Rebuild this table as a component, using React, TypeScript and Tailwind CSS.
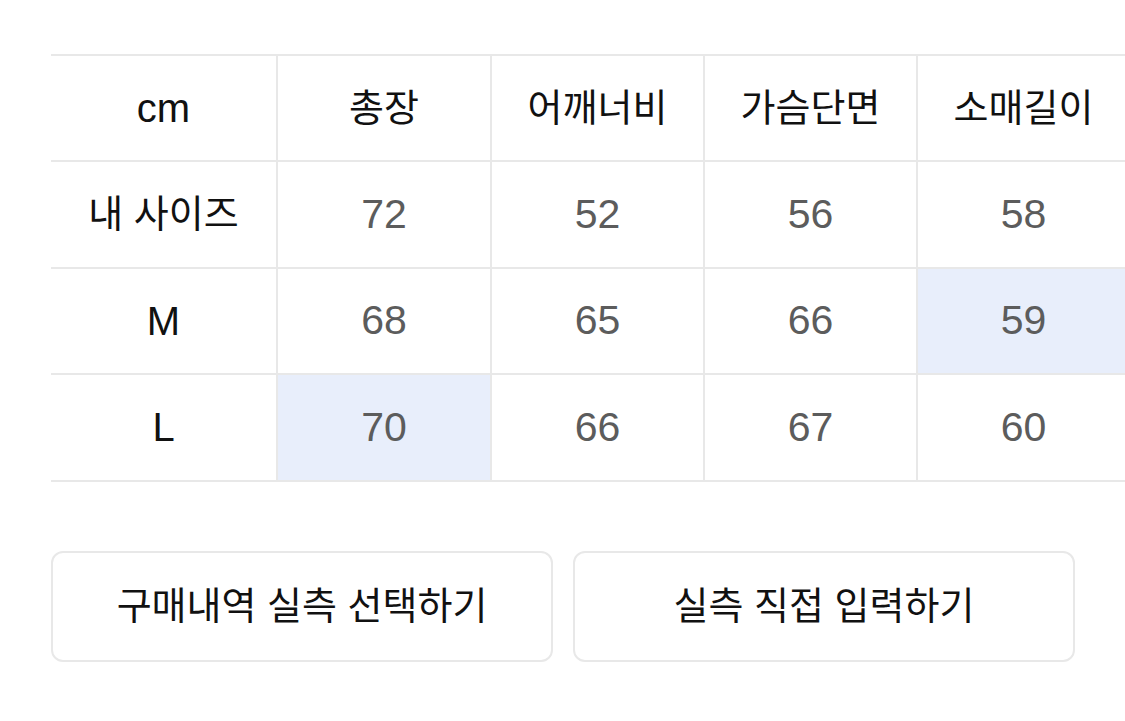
import React from "react";

const headers = ["cm", "총장", "어깨너비", "가슴단면", "소매길이"];
const rows: { label: string; values: string[]; hl?: number }[] = [
  { label: "내 사이즈", values: ["72", "52", "56", "58"] },
  { label: "M", values: ["68", "65", "66", "59"], hl: 3 },
  { label: "L", values: ["70", "66", "67", "60"], hl: 0 },
];

const isLatin = (s: string) => /^[A-Za-z]+$/.test(s);

export default function App() {
  return (
    <div
      className="w-[1125px] h-[721px] bg-white overflow-hidden pt-[54px] pl-[51px]"
      style={{ fontFamily: '"Liberation Sans", "Noto Sans CJK KR", sans-serif' }}
    >
      <div className="w-[1100px] border-t-2 border-[#e8e8e8]">
        <div className="grid grid-cols-[225px_214px_213px_213px_213px] h-[106px] border-b-2 border-[#e8e8e8]">
          {headers.map((h, i) => (
            <div
              key={h}
              className={`flex items-center justify-center ${isLatin(h) ? "text-[40px]" : "text-[38px]"} text-[#111] ${i > 0 ? "border-l-2 border-[#e8e8e8]" : ""}`}
            >
              {h}
            </div>
          ))}
        </div>
        {rows.map((r) => (
          <div
            key={r.label}
            className="grid grid-cols-[225px_214px_213px_213px_213px] h-[106.5px] border-b-2 border-[#e8e8e8]"
          >
            <div
              className={`flex items-center justify-center ${isLatin(r.label) ? "text-[40px]" : "text-[38px]"} text-[#111]`}
            >
              {r.label}
            </div>
            {r.values.map((v, j) => (
              <div
                key={j}
                className={`flex items-center justify-center text-[41px] text-[#5c5c5c] border-l-2 border-[#e8e8e8] ${r.hl === j ? "bg-[#e8eefb]" : ""}`}
              >
                {v}
              </div>
            ))}
          </div>
        ))}
      </div>
      <div className="flex gap-[20px] mt-[69px]">
        <button className="w-[502px] h-[111px] border-2 border-[#e8e8e8] rounded-[12px] bg-white text-[38px] text-[#111] flex items-center justify-center">
          구매내역 실측 선택하기
        </button>
        <button className="w-[502px] h-[111px] border-2 border-[#e8e8e8] rounded-[12px] bg-white text-[38px] text-[#111] flex items-center justify-center">
          실측 직접 입력하기
        </button>
      </div>
    </div>
  );
}
